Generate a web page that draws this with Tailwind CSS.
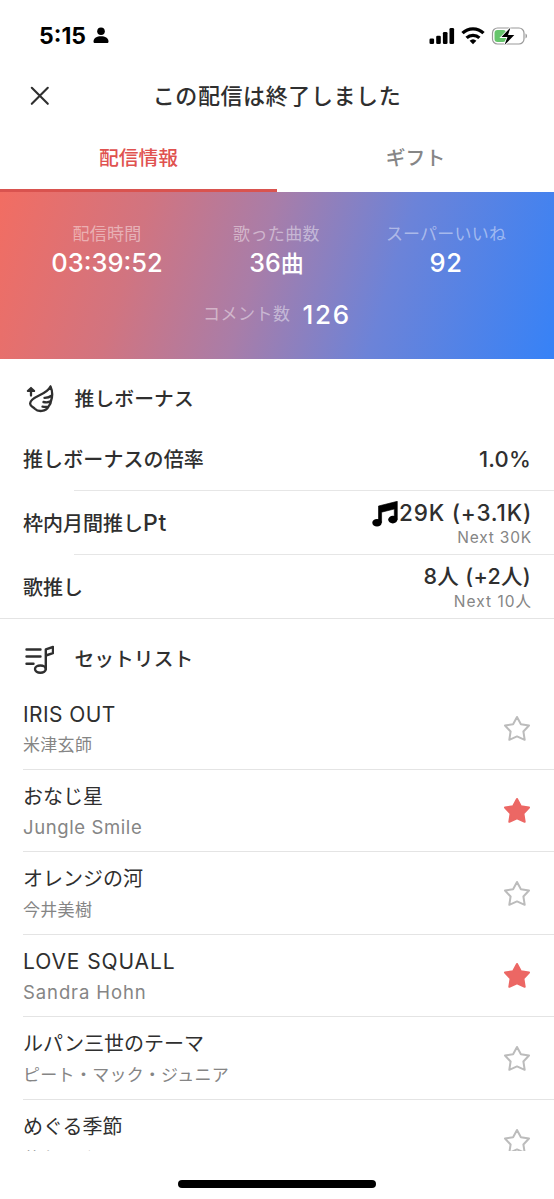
<!DOCTYPE html>
<html lang="ja">
<head>
<meta charset="utf-8">
<title>配信情報</title>
<script src="https://cdn.jsdelivr.net/npm/@tailwindcss/browser@4"></script>
</head>
<body class="bg-white">
<svg class="hidden">
  <symbol id="star" viewBox="0 0 28 28"><path d="M14 3L17.900 10.300L26 11.500L20.400 17.500L21.700 25.800L14 22.400L6.300 25.800L7.600 17.500L2 11.500L10.100 10.300Z" stroke-linejoin="round"/></symbol>
</svg>
<div class="flex h-[1199px] w-[554px] flex-col overflow-hidden bg-white font-['Inter','Noto_Sans_CJK_JP',sans-serif] text-[#2f2f2f]">
  <header class="flex h-[71px] shrink-0 items-center justify-between pl-[39px] pr-[26px] text-black">
    <div class="flex items-center gap-[7px]">
      <span class="pt-[2px] text-[23px] font-bold leading-none">5:15</span>
      <svg class="h-[17px] w-[16px]" viewBox="0 0 16 17"><circle cx="8" cy="4.200" r="3.800"/><path d="M0.500 14.500C0.500 11 4 9.200 8 9.200s7.500 1.800 7.500 5.300c0 1-.6 1.500-1.500 1.500H2c-.9 0-1.500-.5-1.500-1.500z"/></svg>
    </div>
    <div class="flex items-center">
      <svg class="h-[18px] w-[26px]" viewBox="0 0 26 18"><rect x="0.500" y="11.500" width="4.600" height="5.500" rx="1.300"/><rect x="7.200" y="8.700" width="4.600" height="8.300" rx="1.300"/><rect x="13.900" y="5" width="4.600" height="12" rx="1.300"/><rect x="20.500" y="1" width="4.600" height="16" rx="1.300"/></svg>
      <svg class="ml-[6px] h-[18px] w-[24px]" viewBox="0 0 24 18" fill="none" stroke="#000" stroke-width="3.300"><path d="M1.500 6.100a15 15 0 0 1 21 0"/><path d="M5.600 10.900a9.200 9.200 0 0 1 12.800 0"/><path d="M12 17.200l-3.400-3.400a5 5 0 0 1 6.800 0z" fill="#000" stroke="none"/></svg>
      <svg class="ml-[6px] h-[20px] w-[37px]" viewBox="0 0 37 20"><rect x="1.500" y="2" width="31.500" height="16" rx="5" fill="none" stroke="#9a9a9a" stroke-width="1.200"/><path d="M34.500 7.500c2 .8 2 4.200 0 5z" fill="#9a9a9a"/><rect x="3.500" y="4" width="11.500" height="12" rx="3" fill="#66c56c"/><path d="M19.500 1.500L10.500 11h6l-3 8 9.800-10h-6.300z" fill="#000" stroke="#fff" stroke-width="1.800" paint-order="stroke"/></svg>
    </div>
  </header>
  <div class="grid h-[50px] shrink-0 grid-cols-[80px_1fr_80px] items-center">
    <svg class="ml-[30px] h-[20px] w-[20px]" viewBox="0 0 20 20" fill="none" stroke="#2f2f2f" stroke-width="2.100" stroke-linecap="round"><path d="M1.800 1.800l16 16M17.800 1.800l-16 16"/></svg>
    <h1 class="text-center text-[22px] font-medium leading-none tracking-[0.600px]">この配信は終了しました</h1>
  </div>
  <nav class="grid h-[71px] shrink-0 grid-cols-2 text-center text-[19.800px] font-medium leading-[74px]">
    <div class="h-[71px] border-b-[3px] border-[#d9534f] text-[#e0524f]">配信情報</div>
    <div class="h-[71px] text-[#868686]">ギフト</div>
  </nav>
  <section class="flex h-[167px] shrink-0 flex-col bg-[linear-gradient(107deg,#f26d62_0%,#d17480_25%,#a97da8_46%,#6c83d8_69%,#3682f7_100%)] text-white">
    <div class="mt-[31px] flex h-[56px] justify-center">
      <div class="ml-[-1px] w-[170px] text-center"><div class="text-[17px] leading-[22px] tracking-[0.300px] text-white/45">配信時間</div><div class="text-[25.500px] font-medium leading-[36px]">03:39:52</div></div>
      <div class="w-[169px] text-center"><div class="text-[17px] leading-[22px] tracking-[0.400px] text-white/45">歌った曲数</div><div class="text-[25px] font-medium leading-[36px]">36<span class="text-[23px]">曲</span></div></div>
      <div class="w-[170px] text-center"><div class="text-[17px] leading-[22px] tracking-[0.200px] text-white/45">スーパーいいね</div><div class="text-[25.500px] font-medium leading-[36px] tracking-[0.500px]">92</div></div>
    </div>
    <div class="mt-[17px] flex h-[36px] items-center justify-center gap-[12px]"><span class="pt-[2px] text-[17px] tracking-[0.500px] text-white/45">コメント数</span><span class="text-[26px] font-medium tracking-[1.700px]">126</span></div>
  </section>
  <section class="shrink-0 border-b border-[#e4e4e4] font-medium">
    <div class="flex h-[67px] items-center pt-[11px]">
      <svg class="ml-[24px] h-[30px] w-[30px]" viewBox="0 0 30 30" fill="none" stroke="#2f2f2f" stroke-width="2.300" stroke-linecap="round" stroke-linejoin="round"><path d="M7 12.500V6"/><path d="M3.700 8L7 4.800L10.300 8Z" fill="#2f2f2f" stroke-width="1.800"/><path d="M26.500 3.500C24.500 7.500 20.500 10 15.500 12.200C10 14.800 5.600 17.500 6.200 20.800C6.500 23.800 9 23.600 10.800 25.800C14 29 22 29 24.500 23.500C22.500 24.200 20.500 24 18.500 23.700M24.500 23.500C26.200 21.700 27 20 27 18C24.800 19.500 22 19.500 19.500 19M27 18C28.600 13.500 28.500 8 26.500 3.500M27.800 12.500C25.500 14.300 23.500 15 20.500 14.900"/></svg>
      <h2 class="ml-[20.500px] pt-[3px] text-[19.800px] tracking-[0.100px]">推しボーナス</h2>
    </div>
    <div class="flex h-[64px] items-center justify-between px-[23px] pt-[3px] text-[20px]"><span class="tracking-[0.100px]">推しボーナスの倍率</span><span class="-mt-px text-[22px] tracking-[0.200px]">1.0%</span></div>
    <div class="ml-[74px] h-px bg-[#e6e6e6]"></div>
    <div class="flex h-[63px] items-center justify-between px-[23px] pt-[2px] text-[20px]"><span>枠内月間推し<span class="text-[23px] tracking-[0.800px]">Pt</span></span>
      <div class="text-right"><div class="flex h-[28px] items-center justify-end text-[22.500px]"><svg class="mt-[2px] h-[26px] w-[26px]" viewBox="0 0 26 26" fill="#000"><path d="M6.500 5L25.300.3V18.500H22.300V8L9.600 11.200V21.500H6.500Z" stroke="#000" stroke-width=".6" stroke-linejoin="round"/><ellipse cx="5" cy="21.800" rx="4.700" ry="3.800"/><ellipse cx="20.800" cy="18.600" rx="4.600" ry="3.800"/></svg><span class="-mr-px ml-px tracking-[0.800px]">29K (+3.1K)</span></div><div class="-mr-px text-[15.500px] font-normal leading-[22px] tracking-[0.800px] text-[#858585]">Next 30K</div></div>
    </div>
    <div class="ml-[74px] h-px bg-[#e6e6e6]"></div>
    <div class="flex h-[63px] items-center justify-between px-[23px] pt-[2px] text-[20px]"><span>歌推し</span>
      <div class="text-right"><div class="h-[28px] text-[21.500px] leading-[27px] tracking-[0.300px]">8人 (+2人)</div><div class="-mr-px text-[15.500px] font-normal leading-[22px] tracking-[1px] text-[#858585]">Next 10人</div></div>
    </div>
  </section>
  <section class="h-[532px] shrink-0 overflow-hidden">
    <div class="flex h-[68px] items-center pt-[11px]">
      <svg class="ml-[24px] h-[30px] w-[30px]" viewBox="0 0 30 30" fill="none" stroke="#2f2f2f" stroke-width="2.400" stroke-linecap="round" stroke-linejoin="round"><path d="M2.500 5.500h14M2.500 12.500h14M2.500 19.800h7"/><ellipse cx="16.400" cy="25.100" rx="5.400" ry="3.600"/><path d="M21.800 25V5.300L29 3V9.100L21.800 11.500"/></svg>
      <h2 class="ml-[20.500px] pt-[2px] text-[19.800px] font-medium">セットリスト</h2>
    </div>
    <ul>
      <li class="ml-[23px] flex h-[82.500px] items-center justify-between border-b border-[#e4e4e4] pr-[23px]"><div class="pt-[5px]"><div class="text-[21px] leading-[31px] tracking-[0.400px]">IRIS OUT</div><div class="text-[17px] leading-[31px] tracking-[0.300px] text-[#858585]">米津玄師</div></div><svg class="size-[28px] fill-none stroke-[#bcbcbc] stroke-2"><use href="#star"/></svg></li>
      <li class="ml-[23px] flex h-[82.500px] items-center justify-between border-b border-[#e4e4e4] pr-[23px]"><div class="pt-[5px]"><div class="text-[20px] leading-[31px]">おなじ星</div><div class="-mt-px text-[18.500px] leading-[31px] tracking-[0.600px] text-[#858585]">Jungle Smile</div></div><svg class="size-[28px] fill-[#ec6764] stroke-[#ec6764] stroke-2"><use href="#star"/></svg></li>
      <li class="ml-[23px] flex h-[82.500px] items-center justify-between border-b border-[#e4e4e4] pr-[23px]"><div class="pt-[5px]"><div class="text-[20px] leading-[31px]">オレンジの河</div><div class="text-[17px] leading-[31px] tracking-[0.300px] text-[#858585]">今井美樹</div></div><svg class="size-[28px] fill-none stroke-[#bcbcbc] stroke-2"><use href="#star"/></svg></li>
      <li class="ml-[23px] flex h-[82.500px] items-center justify-between border-b border-[#e4e4e4] pr-[23px]"><div class="pt-[3px]"><div class="text-[21px] leading-[31px] tracking-[0.900px]">LOVE SQUALL</div><div class="text-[18.500px] leading-[31px] tracking-[0.900px] text-[#858585]">Sandra Hohn</div></div><svg class="size-[28px] fill-[#ec6764] stroke-[#ec6764] stroke-2"><use href="#star"/></svg></li>
      <li class="ml-[23px] flex h-[82.500px] items-center justify-between border-b border-[#e4e4e4] pr-[23px]"><div class="pt-[5px]"><div class="text-[20px] leading-[31px]">ルパン三世のテーマ</div><div class="text-[17px] leading-[31px] tracking-[0.300px] text-[#858585]">ピート・マック・ジュニア</div></div><svg class="size-[28px] fill-none stroke-[#bcbcbc] stroke-2"><use href="#star"/></svg></li>
      <li class="ml-[23px] flex h-[82.500px] items-center justify-between pr-[23px]"><div class="pt-[5px]"><div class="text-[20px] leading-[31px]">めぐる季節</div><div class="pt-px text-[17px] leading-[31px] tracking-[0.300px] text-[#858585]">井上あずみ</div></div><svg class="size-[28px] fill-none stroke-[#bcbcbc] stroke-2"><use href="#star"/></svg></li>
    </ul>
  </section>
  <div class="mx-auto mt-[29px] h-[8px] w-[198px] shrink-0 rounded-full bg-black"></div>
</div>
</body>
</html>
